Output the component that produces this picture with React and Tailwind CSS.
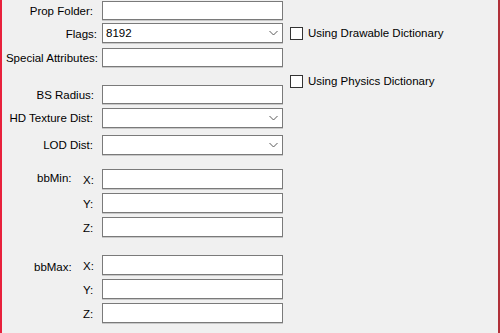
import React from "react";

const font = { fontFamily: '"Liberation Sans", Arial, sans-serif' };

function Chevron() {
  return (
    <svg width="9" height="6" viewBox="0 0 9 6" className="absolute right-[4px] top-1/2 -translate-y-1/2">
      <path d="M0.5 1 L4.5 5 L8.5 1" fill="none" stroke="#5a5a5a" strokeWidth="1" />
    </svg>
  );
}

function Box({ value, combo, h = "h-[20px]" }) {
  return (
    <div className={`relative w-[181px] ${h} bg-white border border-[#7a7a7a] shadow-[0_1px_0_#c8c8c8] flex items-center pl-[3px] text-[11.5px] text-black`}>
      {value}
      {combo && <Chevron />}
    </div>
  );
}

function Row({ label, pr, value, combo, h, className = "", right }) {
  return (
    <div className={`flex items-center ${className}`}>
      <div className={`w-[102px] text-right text-[11.5px] text-black pt-[2px] whitespace-nowrap ${pr}`}>{label}</div>
      <Box value={value} combo={combo} h={h} />
      {right}
    </div>
  );
}

function Check({ label }) {
  return (
    <div className="flex items-center ml-[7px]">
      <div className="w-[13px] h-[13px] bg-white border border-[#333]" />
      <span className="ml-[5px] text-[11.5px] text-black">{label}</span>
    </div>
  );
}

function XYZ({ title, tpl, className }) {
  const rows = ["X:", "Y:", "Z:"];
  return (
    <div className={`flex flex-col gap-[4px] ${className}`}>
      {rows.map((r, i) => (
        <div key={r} className="flex items-center h-[20px]">
          <div className={`w-[83px] text-[11.5px] text-black ${tpl}`}>{i === 0 ? title : ""}</div>
          <div className="w-[19px] text-[11.5px] text-black pt-[4px]">{r}</div>
          <Box />
        </div>
      ))}
    </div>
  );
}

export default function App() {
  return (
    <div
      style={font}
      className="w-[500px] h-[333px] bg-[#f0f0f0] border-l-2 border-l-[#e8203c] border-r-2 border-r-[#b03038] overflow-hidden"
    >
      <div className="flex flex-col -ml-[2px]">
        <Row label="Prop Folder:" pr="pr-[9px]" h="h-[19px]" className="mt-[1px]" />
        <Row
          label="Flags:"
          pr="pr-[5px]"
          value="8192"
          combo
          className="mt-[3px]"
          right={<Check label="Using Drawable Dictionary" />}
        />
        <Row label="Special Attributes:" pr="pr-[4px]" h="h-[19px]" className="mt-[5px]" />
        <div className="flex h-[17px]">
          <div className="w-[283px]" />
          <div className="mt-[5px]">
            <Check label="Using Physics Dictionary" />
          </div>
        </div>
        <Row label="BS Radius:" pr="pr-[8px]" h="h-[19px]" />
        <Row label="HD Texture Dist:" pr="pr-[9px]" combo className="mt-[4px]" />
        <Row label="LOD Dist:" pr="pr-[9px]" combo className="mt-[7px]" />
        <XYZ title="bbMin:" tpl="pl-[37px]" className="mt-[14px]" />
        <XYZ title="bbMax:" tpl="pl-[34px] pt-[5px]" className="mt-[18px]" />
      </div>
    </div>
  );
}
